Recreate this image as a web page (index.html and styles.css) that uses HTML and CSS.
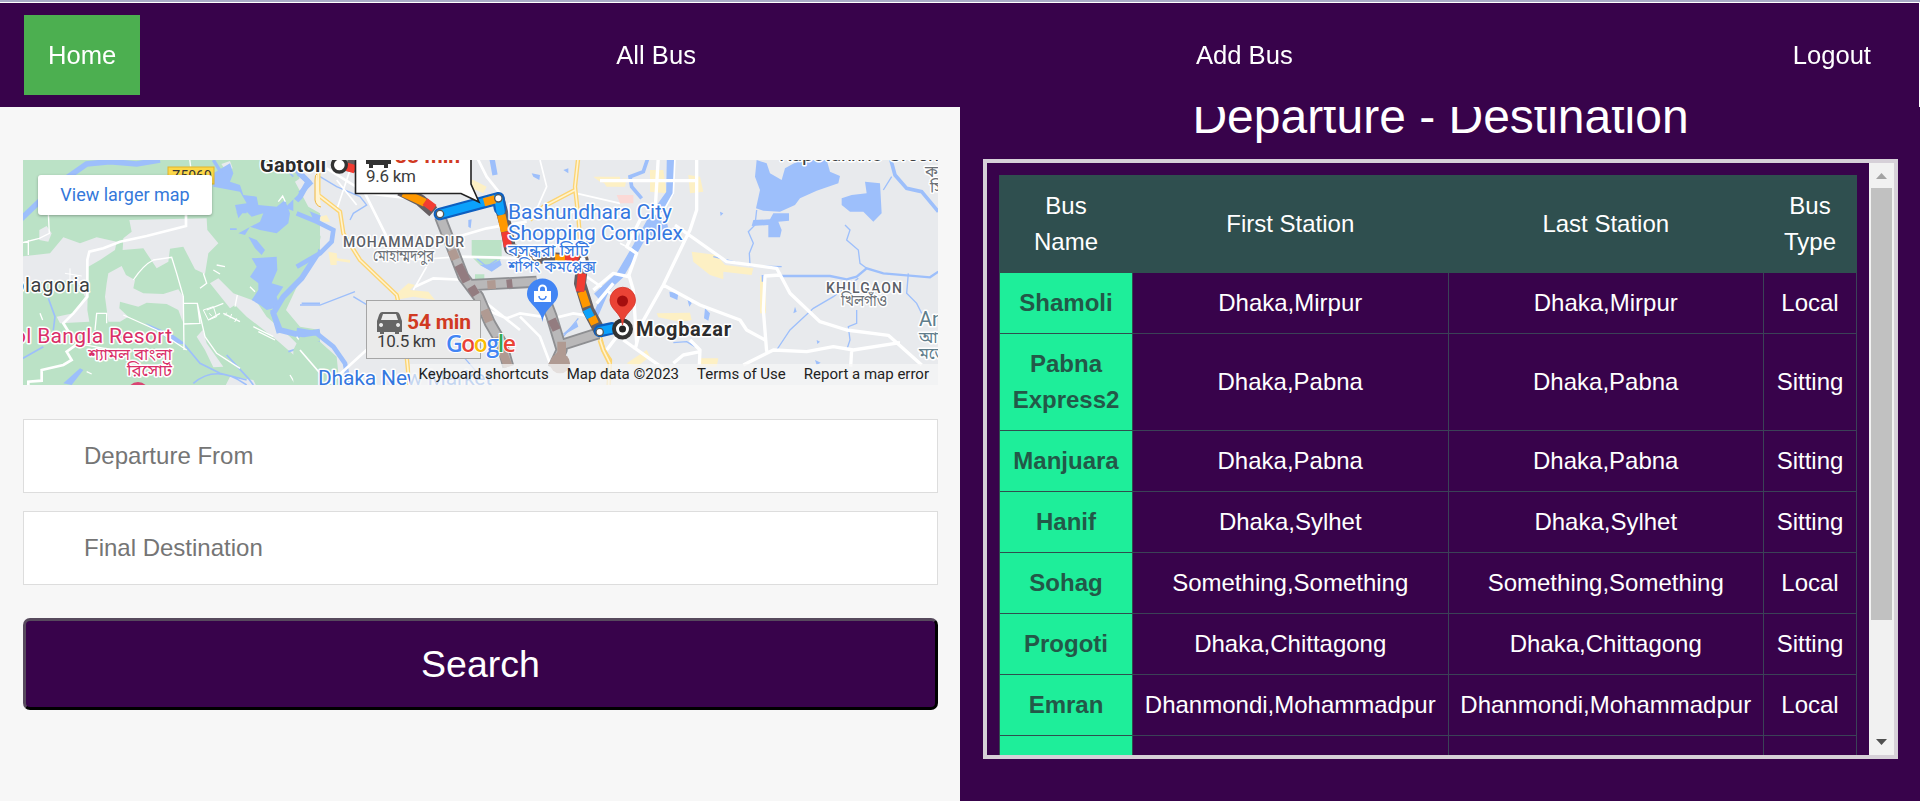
FILE: index.html
```html
<!DOCTYPE html>
<html lang="en">
<head>
<meta charset="utf-8">
<title>Bus Routes</title>
<link rel="stylesheet" href="styles.css">
</head>
<body>
<nav class="nav">
  <a class="nav-link active">Home</a>
  <a class="nav-link">All Bus</a>
  <a class="nav-link">Add Bus</a>
  <a class="nav-link">Logout</a>
</nav>
<main class="layout">
  <section class="search-panel">
    <div class="map">
      <svg class="map-canvas" viewBox="23 160 915 225" width="915" height="225">
        <rect x="23" y="160" width="915" height="225" fill="#e8eaed"/>
        <!-- west side: parks, river, villages -->
        <g transform="translate(0 150) scale(.33333)">
          <path fill="#bbe2c6" d="M60 20H880L900 90 925 140 960 190V300L900 390 858 480 900 530 960 540V720H60Z"/>
          <path fill="#e8eaed" d="M60 320L150 310 190 262 240 280 290 262 350 275 345 300 300 330 265 350 262 480 268 515 180 520 170 500 220 490 255 440 230 390 60 400ZM118 240L140 228 155 250 145 275 118 270ZM388 210L620 205 622 240 655 280 625 310 615 372 585 358 550 290 510 296 505 335 470 355 450 325 430 295 368 300 370 265 395 245ZM320 400L325 370 365 348 378 375 405 390 400 415 430 430 490 432 535 418 550 440 548 515 535 480 500 462 440 458 415 470 360 455 358 475 385 500 360 515 325 515 315 440ZM630 400L655 385 700 430 770 455 800 500 870 560 930 620 945 680 910 640 830 570 740 500 705 465 690 475ZM590 560L608 540 620 580 670 650 640 652 615 600ZM690 680L760 690 770 710H675ZM664 42L690 33 698 55 680 65ZM885 95L915 75 960 100V190L925 170Z"/>
          <path fill="#e8eaed" d="M960 310L905 400 862 480 900 525 960 535Z"/>
          <g fill="#9dbffb">
            <path d="M710 170L740 170 740 190 710 190ZM640 70L690 40 700 70 690 95 720 105 730 135 770 140 775 165 830 170 855 150 870 190 865 220 830 250 780 240 750 230 735 255 715 250 780 215 790 190 755 200 735 180 715 205 705 165 740 160 720 125 640 110ZM690 235L710 235V240H690ZM745 260L770 270 795 300 785 315 765 295ZM755 325L830 320 832 360 815 400 850 410 830 440 840 470 800 480 780 465 755 450 775 420 775 400 750 380 770 350ZM190 700L240 655 250 660 215 705ZM435 518L520 555 555 580 545 583 515 575Z"/>
          </g>
          <g fill="none" stroke="#9dbffb">
            <path stroke-width="17" d="M60 210L170 105 260 42 330 35 410 42 480 30M890 60L925 95 900 140 870 170 960 205M960 300L905 385 850 440 820 490 840 540 900 555 960 545"/>
            <path stroke-width="10" d="M640 30L665 70M815 480L835 550"/>
            <path stroke-width="5" d="M145 445L165 500 160 540M60 630L130 590M550 580L600 640 660 670 740 690M580 700Q650 640 740 705M680 615L745 685 760 705M865 605L960 575M820 20L880 80M905 460H960"/>
          </g>
          <g fill="none" stroke="#fff">
            <path stroke-width="8" d="M558 195V228L440 258 360 275 310 295 268 305 262 330V440L220 490 190 520 215 560 235 580 200 605 215 630 190 645 125 660V692L85 695V710"/>
            <path stroke-width="4" d="M145 190L148 250 118 265 60 280M85 270V315M400 390Q430 345 460 330L515 322 530 370 550 440 552 600M552 460H592L600 520 550 522M592 460L615 560 650 610 720 655M370 495L470 540 560 600M320 520V490H290L285 540M610 370L620 400 600 415M650 345L675 350M640 360L660 372M750 410L765 425M890 560L925 610 960 650M620 480L670 460M625 510L660 490M670 490L720 515M760 530L820 560M775 545L825 570M870 675L885 700 895 680 905 705 930 680M835 155L848 138 856 155M568 20L572 50M120 490L128 510M260 665L275 672M230 580L330 598M705 470L712 435"/>
            <path stroke-width="3" d="M610 480L625 510 650 500 640 470ZM628 490L635 498M680 488L675 496M695 492L690 505M710 505L704 516M195 370L245 378M210 355V390"/>
          </g>
        </g>
        <!-- central districts -->
        <g transform="translate(300 150) scale(.33333)">
          <path fill="#bbe2c6" d="M-20 145L30 185 62 260 50 320 10 345-20 350ZM515 270H605V325L570 360 540 345 515 320ZM525 373H553V395H525ZM0 560L60 575 110 620 120 720H-20V600ZM140 30H165V50H140Z"/>
          <g fill="#fdf0c4">
            <path d="M85 305L110 310 112 325 150 330V338L110 332V345H92ZM285 435L325 400 345 405 330 420 385 425 405 450 340 440 285 450ZM470 80L520 90 560 110 550 130 480 100ZM60 200L80 195 90 215 65 215ZM700 180L740 185 780 175 770 200H720ZM880 80H960V110L900 95Z"/>
          </g>
          <g fill="none" stroke="#9dbffb">
            <path stroke-width="14" d="M-5 70L30 100 0 130M-10 190L50 215 100 240 95 275 60 310-10 350M-10 540L50 550 100 590 135 640 150 720"/>
            <path stroke-width="4" d="M60 80L110 110 180 140 200 165 160 190 150 210M160 440L210 470 200 540M0 465H60L165 425M340 30L320 110M490 620L560 700M790 560L835 505M530 325L560 350 590 330"/>
            <path stroke-width="16" d="M575 20L585 75M960 370L920 420 885 500"/>
          </g>
          <path fill="#9dbffb" d="M540 345L575 342 600 330 605 345 575 365ZM785 555L830 515 835 530 800 550ZM695 70L720 75 718 90 700 80ZM505 210L515 208 512 235 505 230ZM790 60L805 55 805 70Z"/>
          <g fill="none" stroke="#fff">
            <path stroke-width="8" d="M190 120L240 220 275 290M80 55L200 130 330 145M345 410L400 385 500 390M440 270L560 235 680 215M470 320L700 325M660 500L720 560 750 640M530 20L560 80 600 130M560 480L620 505 660 490 760 505 820 490 880 500M90 700L210 590M700 420L760 480M860 380L960 450M560 460L660 540"/>
            <path stroke-width="5" d="M200 30L240 80M110 90L170 165M150 60L110 180M250 300L340 330 480 320M380 500L500 540M720 30L740 110 700 200M830 130L960 160M740 200L860 180 960 200M760 240L800 300M0 600L60 670M380 350L340 420"/>
          </g>
          <g fill="none" stroke="#fcd472" stroke-linejoin="round">
            <path stroke-width="13" d="M55 20V135L120 185 130 250 180 330 290 435 310 520 330 720M835 20L825 110 835 200 845 330M825 120L730 170 690 210M900 560L910 600 930 630 925 720"/>
            <path stroke="#fff3cf" stroke-width="5" d="M55 20V135L120 185 130 250 180 330 290 435 310 520 330 720M835 20L825 110 835 200 845 330M825 120L730 170 690 210M900 560L910 600 930 630 925 720"/>
          </g>
        </g>
        <!-- east side: lakes and roads -->
        <g transform="translate(600 150) scale(.33333)">
          <g fill="#fdf0c4">
            <path d="M0 80L40 90 80 85 75 110 20 110ZM150 60L190 60 200 130 150 125ZM265 75L300 80 310 125 270 130ZM275 305L350 315 375 345 460 355 455 375 370 365 370 388 330 375 280 335ZM480 380H498V490H480ZM170 490L270 488 275 510 240 515 175 502ZM300 625L355 625 350 650H300ZM80 640L140 600 150 620 110 650Z"/>
          </g>
          <path fill="#fbd9d6" d="M50 135H100V160H60Z"/>
          <g fill="#9dbffb">
            <path d="M470 30L500 40 510 70 545 90 555 55 600 30H680L690 65 720 78 715 100 650 122 600 145 585 165 540 185 490 182 468 175 480 120 465 80ZM725 145L755 135 800 130 795 95 840 100 845 190 820 215 790 185 750 185 725 165ZM460 210L510 208 520 190 567 190V212L535 215 545 240 540 262H505V225L455 228ZM130 240L160 200 200 215 205 235 170 270 145 250ZM315 475L330 490 325 512 312 505ZM208 425L235 430 232 450 210 440ZM260 440L275 460 268 470ZM360 185L370 190 362 198ZM485 375H492V395H485ZM585 470L590 485 580 490ZM650 570L660 575 652 582ZM645 630L662 638 650 645Z"/>
          </g>
          <g fill="none" stroke="#9dbffb">
            <path stroke-width="23" d="M212 20L210 130 160 200 110 290 60 375-10 440"/>
            <path stroke-width="11" d="M145 20L130 65 90 80 95 110 125 145M870 20L885 75 920 115 965 125 1015 185"/>
            <path stroke-width="7" d="M540 378H690L740 388 770 380 800 355 850 370 990 382 1015 365"/>
            <path stroke-width="4" d="M470 180L465 225 445 245 460 280 448 310 450 345M340 320L450 347 545 350M735 225L750 240 740 270 775 300 780 340 800 355M775 385L700 440 640 475 570 540 530 600M770 480V520L745 530 750 570 740 600M925 370L920 430 950 460 965 490M875 80L850 120M220 578L260 575 285 590"/>
          </g>
          <g fill="none" stroke="#fff" stroke-linejoin="round">
            <path stroke-width="10" d="M290 20V180L270 240 255 270 190 405 125 520 105 600M175 20L165 190 120 210 80 290 110 310 85 380 40 370-20 420M0 92H290M225 225L380 335 530 355 570 430 660 515 740 540 865 556 965 645M540 375L495 378 490 480 500 605M190 405L300 465 420 510 440 540 495 570M430 645L520 600 620 605 700 590 760 600 900 578M755 600L752 650M70 570L190 655M220 640L250 615 300 605M270 570L300 600 298 645M85 370L100 420 110 580M-10 460L40 400M20 600L50 560"/>
            <path stroke-width="5" d="M225 20L220 130 175 210M60 280L100 300"/>
          </g>
          <path fill="none" stroke="#fcd472" stroke-width="15" d="M0 570L10 600 30 640"/>
          <path fill="none" stroke="#fff3cf" stroke-width="5" d="M0 570L10 600 30 640"/>
        </g>
        <!-- routes -->
        <g transform="translate(300 150) scale(.33333)" fill="none" stroke-linejoin="round">
          <path stroke="#8e8f92" stroke-width="36" d="M420 200L455 290 490 380 535 440 570 520 605 580 625 650M515 405L710 395M715 395L755 500 785 600 760 655M785 585L895 550"/>
          <path stroke="#b9b8b9" stroke-width="25" d="M420 200L455 290 490 380 535 440 570 520 605 580 625 650M515 405L710 395M715 395L755 500 785 600 760 655M785 585L895 550"/>
          <path stroke="#b09a92" stroke-width="26" d="M455 300L467 328M553 480L568 515M590 560L625 650M562 405L587 403M785 575V610L755 650M775 630H780"/>
          <path stroke="#937c80" stroke-width="26" d="M475 345L500 395M513 410L528 435M620 402L637 400M755 508L770 540"/>
          <circle cx="780" cy="640" r="30" fill="#b09a92"/>
          <path stroke="#655f62" stroke-width="36" d="M140 45L200 55M300 120L360 150 400 185M595 145L618 230 630 295 700 322 848 330 840 400 865 480 900 545"/>
          <path stroke="#0d5fc0" stroke-width="38" stroke-linecap="round" d="M420 192L595 145M595 145L600 175M900 543L935 535"/>
          <path stroke="#0ba1fb" stroke-width="25" stroke-linecap="round" d="M420 192L595 145 602 185M900 543L940 535"/>
          <path stroke="#ff9800" stroke-width="25" d="M310 128L375 158M552 157L585 148M604 195L615 245M765 325L795 327M845 425L860 470M875 500L885 522"/>
          <path stroke="#f23c32" stroke-width="25" d="M140 50L165 58M375 155L402 175M616 245L624 290M795 327L840 330M846 370L840 425"/>
          <path stroke="#0ba1fb" stroke-width="25" d="M860 478L872 502"/>
          <g fill="#fff" stroke="#555" stroke-width="4"><circle cx="420" cy="192" r="11"/><circle cx="595" cy="145" r="11"/><circle cx="628" cy="300" r="11"/><circle cx="675" cy="320" r="11"/><circle cx="706" cy="320" r="11"/><circle cx="848" cy="330" r="11"/><circle cx="899" cy="546" r="11"/></g>
          <circle cx="118" cy="45" r="21" fill="#fff" stroke="#333" stroke-width="10"/>
        </g>
        <!-- place labels -->
        <g class="label">
          <text x="260" y="172" class="city" textLength="66">Gabtoli</text>
          <text x="636" y="336" class="city" textLength="95">Mogbazar</text>
          <text x="13" y="292" class="town" textLength="77">olagoria</text>
          <text x="14" y="343" class="resort" textLength="158">ol Bangla Resort</text>
          <text x="172" y="360" class="resort bn" text-anchor="end" textLength="84" lengthAdjust="spacingAndGlyphs">শ্যামল বাংলা</text>
          <text x="172" y="376" class="resort bn" text-anchor="end" textLength="45" lengthAdjust="spacingAndGlyphs">রিসোর্ট</text>
          <text x="343" y="247" class="area" textLength="121">MOHAMMADPUR</text>
          <text x="373" y="261" class="bn grey" textLength="61" lengthAdjust="spacingAndGlyphs">মোহাম্মদপুর</text>
          <text x="826" y="293" class="area" textLength="76">KHILGAON</text>
          <text x="841" y="306" class="bn grey" textLength="46" lengthAdjust="spacingAndGlyphs">খিলগাঁও</text>
          <text x="508" y="219" class="poi" textLength="164">Bashundhara City</text>
          <text x="508" y="240" class="poi" textLength="175">Shopping Complex</text>
          <text x="508" y="256" class="poi bn" textLength="81" lengthAdjust="spacingAndGlyphs">বসুন্ধরা সিটি</text>
          <text x="508" y="272" class="poi bn" textLength="88" lengthAdjust="spacingAndGlyphs">শপিং কমপ্লেক্স</text>
          <text x="318" y="385" class="poi" textLength="174">Dhaka New Market</text>
          <text x="779" y="161" class="town" textLength="160">Kapotakkho Green</text>
          <text x="925" y="177" class="bn grey">ক</text>
          <text x="930" y="193" class="bn grey">সি</text>
          <text x="919" y="326" class="town slate">An</text>
          <text x="919" y="343" class="bn slate">আন</text>
          <text x="919" y="359" class="bn slate">মডে</text>
        </g>
        <circle cx="138" cy="393" r="11" fill="#d94573"/>
        <rect x="168" y="167" width="46" height="17" fill="#fcd849" stroke="#e2b42c"/>
        <text x="172" y="181" class="shield">Z5069</text>
        <path d="M317 174q-2 0-2 6v20q1 6 6 7" fill="#fff4d2" stroke="#f0b641"/>
        <!-- pins -->
        <path d="M542.5 322C541 308 527 304 527 294a15.500 15.500 0 0 1 31 0C558 304 544 308 542.500 322Z" fill="#4285f4"/>
        <path d="M534 291h17v11h-17z" fill="#fff"/>
        <path d="M539 291v-2a3.500 3.500 0 0 1 7 0v2" fill="none" stroke="#fff" stroke-width="2"/>
        <path d="M539 296a3.500 3.500 0 0 0 7 0" fill="none" stroke="#4285f4" stroke-width="1.500"/>
        <circle cx="622.500" cy="329" r="8.500" fill="#fff" stroke="#333" stroke-width="4"/>
        <circle cx="622.500" cy="329" r="3.500" fill="#222"/>
        <path d="M622.500 325C621 312 610 310 610 300a12.700 12.700 0 0 1 25.500 0C635.500 310 624 312 622.500 325Z" fill="#ea4335" stroke="#d4342a" stroke-width=".8"/>
        <circle cx="622.500" cy="301" r="5.500" fill="#a50e0e"/>
        <!-- travel time callouts -->
        <path d="M355.500 150H471V184L479 202 461 193.500H355.500Z" fill="#fff" stroke="#222" stroke-width="1.600"/>
        <path d="M371 151h15l5 8v5h-3v4h-4v-3h-11v3h-4v-4h-3v-5z" fill="#333"/>
        <text x="395" y="163" class="time" textLength="65">38 min</text>
        <text x="366" y="182" class="dist" textLength="50">9.6 km</text>
        <rect x="366.500" y="300.500" width="114" height="58" fill="#ebebeb" stroke="#a6a6a6"/>
        <path fill="#666" fill-rule="evenodd" d="M382 312h15q2 0 3 3l2 6v11h-3v2h-4v-2h-11v2h-4v-2h-3v-11l2-6q1-3 3-3ZM383 314l-2 6h17l-2-6ZM381 323a2 2 0 1 0 .1 0ZM398 323a2 2 0 1 0 .1 0Z"/>
        <text x="407" y="329" class="time" textLength="64">54 min</text>
        <text x="377" y="347" class="dist" textLength="59">10.5 km</text>
        <text x="446" y="352" class="google" textLength="70"><tspan fill="#4285f4">G</tspan><tspan fill="#ea4335">o</tspan><tspan fill="#fbbc04">o</tspan><tspan fill="#4285f4">g</tspan><tspan fill="#34a853">l</tspan><tspan fill="#ea4335">e</tspan></text>
      </svg>
      <a class="map-link">View larger map</a>
      <div class="map-credits"><span>Keyboard shortcuts</span><span>Map data ©2023</span><span>Terms of Use</span><span>Report a map error</span></div>
    </div>
    <form class="search-form">
      <input class="field" type="text" placeholder="Departure From">
      <input class="field" type="text" placeholder="Final Destination">
      <button class="search-button" type="button">Search</button>
    </form>
  </section>
  <section class="results-panel">
    <h1 class="title">Departure - Destination</h1>
    <div class="results">
      <div class="results-view">
        <table class="bus-table">
          <colgroup><col class="col-name"><col class="col-station"><col class="col-station"><col class="col-type"></colgroup>
          <thead><tr><th>Bus Name</th><th>First Station</th><th>Last Station</th><th>Bus Type</th></tr></thead>
          <tbody>
            <tr><th>Shamoli</th><td>Dhaka,Mirpur</td><td>Dhaka,Mirpur</td><td>Local</td></tr>
            <tr><th>Pabna Express2</th><td>Dhaka,Pabna</td><td>Dhaka,Pabna</td><td>Sitting</td></tr>
            <tr><th>Manjuara</th><td>Dhaka,Pabna</td><td>Dhaka,Pabna</td><td>Sitting</td></tr>
            <tr><th>Hanif</th><td>Dhaka,Sylhet</td><td>Dhaka,Sylhet</td><td>Sitting</td></tr>
            <tr><th>Sohag</th><td>Something,Something</td><td>Something,Something</td><td>Local</td></tr>
            <tr><th>Progoti</th><td>Dhaka,Chittagong</td><td>Dhaka,Chittagong</td><td>Sitting</td></tr>
            <tr><th>Emran</th><td>Dhanmondi,Mohammadpur</td><td>Dhanmondi,Mohammadpur</td><td>Local</td></tr>
            <tr class="spacer"><th></th><td></td><td></td><td></td></tr>
          </tbody>
        </table>
      </div>
      <div class="scrollbar">
        <svg class="arrow" viewBox="0 0 25 25"><path d="M7 16L12.500 10 18 16Z" fill="#a3a3a3"/></svg>
        <div class="thumb"></div>
        <svg class="arrow arrow-down" viewBox="0 0 25 25"><path d="M7 9L12.500 15 18 9Z" fill="#505050"/></svg>
      </div>
    </div>
  </section>
</main>
</body>
</html>
```
FILE: styles.css
```css
* { box-sizing: border-box; }
body {
  margin: 0;
  height: 801px;
  overflow: hidden;
  background: #fff;
  border-top: 2px solid #a9acc6;
  font-family: "Liberation Sans", Arial, sans-serif;
}
.nav {
  position: fixed;
  top: 3px;
  left: 0;
  z-index: 5;
  width: 1919px;
  height: 104px;
  padding: 12px 24px;
  display: flex;
  justify-content: space-between;
  background: #38034b;
  box-shadow: 1px 0 0 #fff;
}
.nav-link {
  padding: 0 24px;
  line-height: 80px;
  font-size: 25.6px;
  color: #fff;
}
.nav-link.active { background: #4caf50; }
.layout {
  margin-top: 1px;
  height: 798px;
  display: grid;
  grid-template-columns: 960px 960px;
}
.search-panel {
  padding: 157px 22px 0 23px;
  background: #f7f7f7;
}
.map {
  position: relative;
  height: 225px;
  overflow: hidden;
  font-family: Roboto, sans-serif;
}
.map-canvas { display: block; }
.label text {
  paint-order: stroke;
  stroke: #fff;
  stroke-width: 3px;
  stroke-linejoin: round;
}
.city { font-size: 20px; font-weight: 700; fill: #2c2c2c; }
.town { font-size: 20px; fill: #3c3f43; }
.area { font-size: 14px; font-weight: 500; fill: #5b6067; }
.poi { font-size: 21px; fill: #3578df; }
.resort { font-size: 21px; fill: #d92f68; }
.bn { font-size: 16px; font-family: "Noto Sans Bengali", "Noto Sans", sans-serif; }
.grey { fill: #6c7177; }
.slate { fill: #607d8b; }
.shield { font-size: 14px; fill: #333; }
.time { font-size: 21px; font-weight: 700; fill: #d13a22; }
.dist { font-size: 17px; fill: #3c3c3c; }
.google {
  font-family: "Open Sans", sans-serif;
  font-size: 23px;
  font-weight: 600;
  paint-order: stroke;
  stroke: #fff;
  stroke-width: 2px;
}
.map-link {
  position: absolute;
  top: 15px;
  left: 15px;
  width: 174px;
  height: 40px;
  border-radius: 3px;
  background: #fff;
  box-shadow: 0 1px 3px rgba(0, 0, 0, .3);
  font-size: 18px;
  line-height: 39px;
  text-align: center;
  color: #3478da;
}
.map-credits {
  position: absolute;
  right: 0;
  bottom: 0;
  height: 21px;
  display: flex;
  background: rgba(245, 245, 245, .75);
  font-size: 15px;
  line-height: 21px;
  color: #222;
  white-space: nowrap;
}
.map-credits span { padding: 0 9px; }
.search-form {
  margin-top: 34px;
  display: flex;
  flex-direction: column;
}
.field {
  height: 74px;
  margin: 0 0 18px;
  padding: 0 24px 1px 60px;
  border: 1px solid #ddd;
  background: #fff;
  font: 24px "Liberation Sans", Arial, sans-serif;
}
.field::placeholder { color: #757575; }
.search-button {
  height: 92px;
  margin-top: 15px;
  padding: 0;
  border: 3px solid;
  border-color: #574a5d #000 #000 #574a5d;
  border-radius: 7px;
  background: #38034b;
  font: 37.5px "Liberation Sans", Arial, sans-serif;
  color: #fff;
}
.results-panel {
  padding: 78px 22px 0 23px;
  background: #38034b;
}
.title {
  margin: 0 0 6px;
  font-size: 48px;
  font-weight: 400;
  line-height: 72px;
  text-align: center;
  color: #fff;
}
.results {
  height: 600px;
  display: flex;
  border: 4px solid #d6d0d8;
}
.results-view {
  width: 882px;
  height: 592px;
  padding: 12px;
  overflow: hidden;
}
.bus-table {
  width: 857px;
  table-layout: fixed;
  border-collapse: collapse;
  font-size: 24px;
  line-height: 36px;
  text-align: center;
  color: #fff;
}
.col-name { width: 133px; }
.col-station { width: 315.5px; }
.col-type { width: 93px; }
.bus-table th,
.bus-table td {
  padding: 12px 0;
  border: 1px solid #3b4257;
}
.bus-table thead th {
  padding: 12px 20px;
  border-color: #2f4f4f;
  background: #2f4f4f;
  font-weight: 400;
}
.bus-table tbody th {
  border-color: #2f4f4f;
  background: #1eee9a;
  color: #235848;
}
.spacer { height: 61px; }
.scrollbar {
  width: 25px;
  display: flex;
  flex-direction: column;
  background: #f1f1f1;
}
.arrow {
  width: 25px;
  height: 25px;
}
.arrow-down { margin-top: auto; }
.thumb {
  height: 432px;
  margin: 0 2px;
  background: #c1c1c1;
}
```
